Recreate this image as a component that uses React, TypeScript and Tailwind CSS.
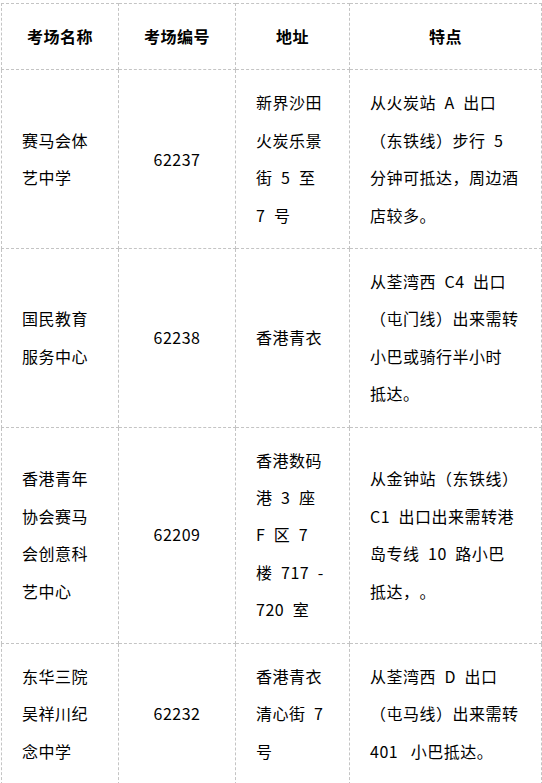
const E = "\u2002";

interface Row {
  name: string[];
  code: string;
  addr: string[];
  note: string[];
}

const rows: Row[] = [
  {
    name: ["赛马会体", "艺中学"],
    code: "62237",
    addr: ["新界沙田", "火炭乐景", `街${E}5${E}至`, `7${E}号`],
    note: [`从火炭站${E}A${E}出口`, `（东铁线）步行${E}5`, "分钟可抵达，周边酒", "店较多。"],
  },
  {
    name: ["国民教育", "服务中心"],
    code: "62238",
    addr: ["香港青衣"],
    note: [`从荃湾西${E}C4${E}出口`, "（屯门线）出来需转", "小巴或骑行半小时", "抵达。"],
  },
  {
    name: ["香港青年", "协会赛马", "会创意科", "艺中心"],
    code: "62209",
    addr: ["香港数码", `港${E}3${E}座`, `F${E}区${E}7`, `楼${E}717${E}-`, `720${E}室`],
    note: ["从金钟站（东铁线）", `C1${E}出口出来需转港`, `岛专线${E}10${E}路小巴`, "抵达，。"],
  },
  {
    name: ["东华三院", "吴祥川纪", "念中学"],
    code: "62232",
    addr: ["香港青衣", `清心街${E}7`, "号"],
    note: [`从荃湾西${E}D${E}出口`, "（屯马线）出来需转", `401${E} 小巴抵达。`],
  },
];

const cell = "border border-dashed border-[#c4c4c4] px-[20px] py-[14px] align-middle";

function Lines({ lines }: { lines: string[] }) {
  return (
    <>
      {lines.map((l, i) => (
        <div key={i} className="whitespace-pre">
          {l}
        </div>
      ))}
    </>
  );
}

export default function App() {
  return (
    <div className="min-h-screen bg-white pt-[3px] pl-[1px] font-['Noto_Sans_CJK_SC','Liberation_Sans',sans-serif] text-[16px] tracking-[0.5px] text-black [text-spacing-trim:space-all]">
      <table className="w-[540px] table-fixed border-collapse leading-[37.4px]">
        <colgroup>
          <col className="w-[117px]" />
          <col className="w-[117px]" />
          <col className="w-[114px]" />
          <col className="w-[192px]" />
        </colgroup>
        <thead>
          <tr>
            <th className={`${cell} text-center font-bold`}>考场名称</th>
            <th className={`${cell} text-center font-bold`}>考场编号</th>
            <th className={`${cell} text-center font-bold`}>地址</th>
            <th className={`${cell} text-center font-bold`}>特点</th>
          </tr>
        </thead>
        <tbody>
          {rows.map((r) => (
            <tr key={r.code}>
              <td className={`${cell} text-left`}>
                <Lines lines={r.name} />
              </td>
              <td className={`${cell} text-center`}>{r.code}</td>
              <td className={`${cell} text-left`}>
                <Lines lines={r.addr} />
              </td>
              <td className={`${cell} text-left`}>
                <Lines lines={r.note} />
              </td>
            </tr>
          ))}
        </tbody>
      </table>
    </div>
  );
}
